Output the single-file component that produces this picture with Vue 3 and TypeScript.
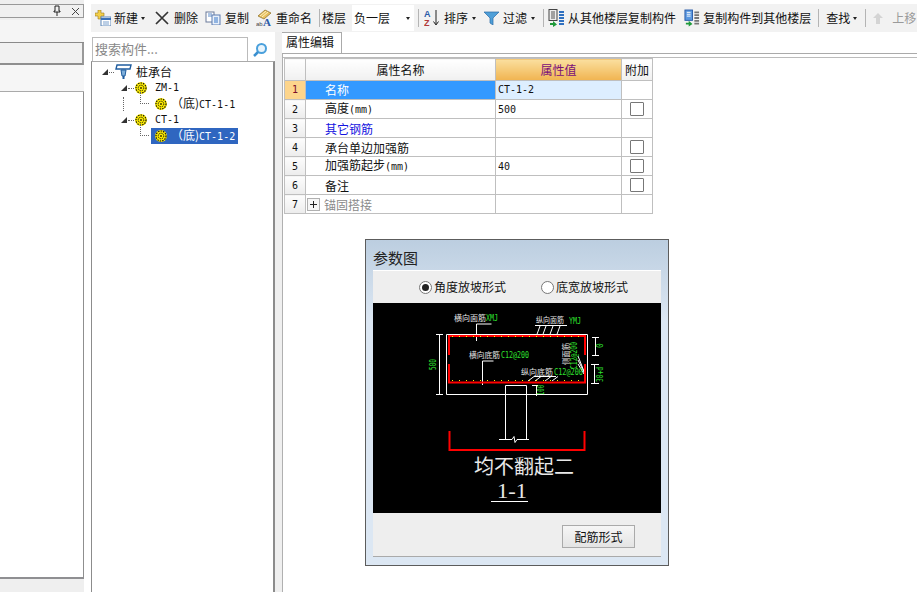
<template>
  <div class="app">
    <svg class="defs" width="0" height="0">
      <symbol id="gear" viewBox="0 0 12 12">
        <circle cx="6" cy="6" r="6" fill="#ffee00" />
        <circle cx="6" cy="6" r="5" fill="none" stroke="#111" stroke-width="1.200" stroke-dasharray="1.400 1.100" />
        <circle cx="6" cy="6" r="2.800" fill="none" stroke="#111" stroke-width="1" stroke-dasharray="1.300 .9" />
        <circle cx="6" cy="6" r="1" fill="#443a00" />
      </symbol>
      <symbol id="floors-a" viewBox="0 0 17 18">
        <rect x="1" y=".5" width="8" height="11" fill="#eee" stroke="#444" />
        <path d="M3 3h4M3 5h4M3 7h4M3 9h4" stroke="#555" />
        <path d="M11 3h5M11 6h5M11 9h5M11 12h5M11 15h5" stroke="#2f70c0" stroke-width="2" />
        <path d="M2 14h3v-2l4 3.500-4 2.500v-2H2z" fill="#1f9a3a" />
      </symbol>
      <symbol id="floors-b" viewBox="0 0 17 18">
        <rect x="1" y=".5" width="8" height="11" fill="#5a98e0" stroke="#2a5ca8" />
        <path d="M3 3h4M3 5h4M3 7h4" stroke="#fff" />
        <path d="M11 3h5M11 6h5M11 9h5M11 12h5M11 15h5" stroke="#777" stroke-width="2" />
        <path d="M2 14h3v-2l4 3.500-4 2.500v-2H2z" fill="#1f9a3a" />
      </symbol>
    </svg>

    <aside class="left">
      <div class="left-head">
        <svg width="10" height="12" viewBox="0 0 10 12" class="pin"><path d="M3 1h4v5h1v1H2V6h1zM5 7v4" fill="none" stroke="#222" /></svg>
        <svg width="9" height="9" viewBox="0 0 9 9" class="close"><path d="M1 1l7 7M8 1L1 8" stroke="#444" /></svg>
      </div>
      <div class="left-row"></div>
      <div class="left-btn"></div>
      <div class="left-row2"></div>
      <div class="left-list"></div>
    </aside>

    <div class="main">
      <div class="toolbar">
        <div class="tb m4 g3">
          <svg width="16" height="16" viewBox="0 0 16 16">
            <path d="M3 0h3v3h3v3H6v3H3V6H0V3h3z" fill="#f2cf4a" stroke="#9a7a20" stroke-width=".6" />
            <rect x="6" y="7" width="10" height="9" fill="#fff" stroke="#5a86b8" />
            <path d="M6 9h10" stroke="#3a70b8" stroke-width="2" />
            <path d="M8 12h6M8 14h6" stroke="#7aa0cc" />
          </svg>
          <span>新建</span><i class="caret"></i>
        </div>
        <div class="tb m10 g5">
          <svg width="14" height="14" viewBox="0 0 14 14"><path d="M1 1l12 12M13 1L1 13" stroke="#333" stroke-width="1.700" /></svg>
          <span>删除</span>
        </div>
        <div class="tb m7 g4">
          <svg width="16" height="14" viewBox="0 0 16 14">
            <rect x="1" y="1" width="8" height="10" fill="#fff" stroke="#6a7a9a" />
            <path d="M3 3h4M3 5h4" stroke="#5a8ac8" />
            <rect x="7" y="4" width="8" height="10" fill="#e8f0fa" stroke="#5a7ab0" />
            <path d="M9 7h4M9 9h4M9 11h4" stroke="#3a78c8" />
          </svg>
          <span>复制</span>
        </div>
        <div class="tb m7 g4">
          <svg width="16" height="18" viewBox="0 0 16 18">
            <path d="M2 7l7-6 6 3-7 6z" fill="#e8c060" stroke="#8a6a20" stroke-width=".7" />
            <path d="M4 7l6-5M6 8l6-5" stroke="#fff2c0" />
            <text x="0" y="17" class="ic-ab">ab</text>
            <text x="7" y="17" class="ic-a">A</text>
          </svg>
          <span>重命名</span>
        </div>
        <i class="sep m7"></i>
        <div class="tb m2"><span>楼层</span></div>
        <div class="combo">
          <span>负一层</span><i class="caret"></i>
        </div>
        <i class="sep m4"></i>
        <div class="tb m5 g4">
          <svg width="16" height="18" viewBox="0 0 16 18">
            <text x="0" y="8" class="ic-sa">A</text>
            <text x="0" y="17" class="ic-sz">Z</text>
            <path d="M12 1v14M9.500 12.500L12 16l2.500-3.500" fill="none" stroke="#222" />
          </svg>
          <span>排序</span><i class="caret"></i>
        </div>
        <div class="tb m8 g4">
          <svg width="15" height="14" viewBox="0 0 15 14"><path d="M0 1h15L9 7v7L6 12V7z" fill="#4f9fd8" stroke="#2a6ca8" stroke-width=".7" /></svg>
          <span>过滤</span><i class="caret"></i>
        </div>
        <i class="sep m8"></i>
        <div class="tb m4 g3">
          <svg width="17" height="18"><use href="#floors-a" /></svg>
          <span>从其他楼层复制构件</span>
        </div>
        <div class="tb m8 g3">
          <svg width="16" height="18"><use href="#floors-b" /></svg>
          <span>复制构件到其他楼层</span>
        </div>
        <i class="sep m7"></i>
        <div class="tb m7"><span>查找</span><i class="caret"></i></div>
        <i class="sep m8"></i>
        <div class="tb m7 g9 off">
          <svg width="10" height="11" viewBox="0 0 10 11"><path d="M5 0l5 5H7v6H3V5H0z" fill="#d4d4d4" /></svg>
          <span>上移</span>
        </div>
      </div>

      <div class="body">
        <div class="mid">
          <div class="search">
            <div class="search-input">搜索构件...</div>
            <div class="search-btn">
              <svg width="16" height="16" viewBox="0 0 16 16">
                <circle cx="9.500" cy="6.500" r="4.500" fill="#e8f4fc" stroke="#4aa0dc" stroke-width="2" />
                <path d="M6 10l-4 4" stroke="#3a90d0" stroke-width="2.500" />
              </svg>
            </div>
          </div>
          <div class="tree">
            <i class="vdots"></i>
            <div class="node root">
              <i class="arrow"></i><i class="hdots h5"></i>
              <svg width="17" height="16" viewBox="0 0 17 16" class="pile">
                <path d="M2 1h14l-1 4H1z" fill="#fff" stroke="#1f5c9e" stroke-width="1.400" />
                <path d="M6 6h5l-1 6H7z" fill="#7fb0dc" stroke="#1f5c9e" />
                <path d="M8.500 12v3" stroke="#1f5c9e" stroke-width="2" />
              </svg>
              <span>桩承台</span>
            </div>
            <template v-for="n in nodes" :key="n.name">
              <div class="node lv1">
                <i class="arrow"></i><i class="hdots h3"></i>
                <svg width="12" height="12" class="gear"><use href="#gear" /></svg>
                <span class="lat name1">{{ n.name }}</span>
              </div>
              <div class="node lv2">
                <i class="elbow"></i>
                <div class="leaf" :class="{ sel: n.sel }">
                  <svg width="12" height="12" class="gear"><use href="#gear" /></svg>
                  <span class="leaf-text">（底)<span class="lat">{{ n.child }}</span></span>
                </div>
              </div>
            </template>
          </div>
        </div>

        <div class="content">
          <div class="tabs"><div class="tab">属性编辑</div></div>
          <div class="pane">
            <table class="grid">
              <thead>
                <tr>
                  <th class="c-no"></th>
                  <th class="c-name">属性名称</th>
                  <th class="c-val">属性值</th>
                  <th class="c-add">附加</th>
                </tr>
              </thead>
              <tbody>
                <tr v-for="(r, i) in rows" :key="i" :class="{ active: i === 0 }">
                  <td class="no">{{ i + 1 }}</td>
                  <td class="nm" :class="{ link: r.link, muted: r.plus }">
                    <i v-if="r.plus" class="plus"></i>{{ r.name }}<span v-if="r.unit" class="unit">(mm)</span>
                  </td>
                  <td class="val lat">{{ r.value }}</td>
                  <td class="add"><i v-if="r.check" class="check"></i></td>
                </tr>
              </tbody>
            </table>

            <div class="dialog">
              <div class="dlg-title">参数图</div>
              <div class="dlg-inner">
                <div class="radios">
                  <label class="radio"><i class="dot on"></i>角度放坡形式</label>
                  <label class="radio"><i class="dot"></i>底宽放坡形式</label>
                </div>
                <svg class="cad" width="288" height="210" viewBox="373 303 288 210">
                  <rect x="373" y="303" width="288" height="210" fill="#000" />
                  <!-- concrete outline and pile -->
                  <g fill="none" stroke="#fff">
                    <path d="M446.500 334.500h141v60h-141z" />
                    <path d="M505.500 394.500v-9h21v9M505.500 394v45M526.500 394v45" />
                    <path d="M499 439.500h13l2 -3 1 6 2-3h12" />
                    <path d="M439.500 334v60M436 334.500h7M436 394.500h7" />
                    <path d="M595.500 337v18M592 337.500h7M592 355.500h7" />
                    <path d="M594.500 364v20M591 364.500h8M591 383.500h8" />
                    <path d="M536.500 385v11M532 385.500h6" />
                    <path d="M476.500 341v-17h15" />
                    <path d="M482.500 385v-24h11" />
                    <path d="M535 325.500h32M540 326l-4 11M546 326l-4 11M553 326l-4 11M560 326l-4 11" />
                    <path d="M528 381l6-4.500h22M535 381l6-4.500M545 381l6-4.500M552 381l6-4.500" />
                    <path d="M578 356l7 18M578 360l7 14M578 364l6 10" />
                    <path d="M491 501.500h37" />
                  </g>
                  <!-- rebar -->
                  <g fill="none" stroke="#f00" stroke-width="2">
                    <path d="M449 355v-19h136v19" />
                    <path d="M449 364v18.500h136V364" />
                    <path d="M449.500 431v19h135v-19" />
                  </g>
                  <g fill="none" stroke="#ff0" stroke-dasharray="1 6">
                    <path d="M452 336.500h132" />
                    <path d="M452 380.500h132" />
                  </g>
                  <!-- labels -->
                  <g class="cad-s">
                    <text x="454" y="321">横向面筋</text>
                    <text x="536" y="323" textLength="28" lengthAdjust="spacingAndGlyphs">纵向面筋</text>
                    <text x="469" y="358" textLength="31" lengthAdjust="spacingAndGlyphs">横向底筋</text>
                    <text x="521" y="375" textLength="32" lengthAdjust="spacingAndGlyphs">纵向底筋</text>
                    <text transform="translate(569 365) rotate(-90)" textLength="22" lengthAdjust="spacingAndGlyphs">侧面筋</text>
                  </g>
                  <g class="cad-g">
                    <text x="486" y="321" textLength="12" lengthAdjust="spacingAndGlyphs">XMJ</text>
                    <text x="569" y="324" textLength="12" lengthAdjust="spacingAndGlyphs">YMJ</text>
                    <text x="501" y="358" textLength="28" lengthAdjust="spacingAndGlyphs">C12@200</text>
                    <text x="554" y="375" textLength="29" lengthAdjust="spacingAndGlyphs">C12@200</text>
                    <text transform="translate(577 369) rotate(-90)" textLength="27" lengthAdjust="spacingAndGlyphs">C12@200</text>
                    <text transform="translate(436 370) rotate(-90)" textLength="11" lengthAdjust="spacingAndGlyphs">500</text>
                    <text transform="translate(603 348) rotate(-90)">0</text>
                    <text transform="translate(603 382) rotate(-90)" textLength="15" lengthAdjust="spacingAndGlyphs">30+d</text>
                    <text transform="translate(544 395) rotate(-90)" textLength="10" lengthAdjust="spacingAndGlyphs">100</text>
                  </g>
                  <text x="524" y="474" class="cad-big">均不翻起二</text>
                  <text x="497" y="498" class="cad-sec" textLength="30" lengthAdjust="spacingAndGlyphs">1-1</text>
                </svg>
                <div class="dlg-foot"><button class="btn">配筋形式</button></div>
              </div>
            </div>
          </div>
        </div>
      </div>
    </div>
  </div>
</template>

<script setup lang="ts">
interface Row {
  name: string
  value?: string
  unit?: boolean
  check?: boolean
  link?: boolean
  plus?: boolean
}

const nodes = [
  { name: 'ZM-1', child: 'CT-1-1', sel: false },
  { name: 'CT-1', child: 'CT-1-2', sel: true },
]

const rows: Row[] = [
  { name: '名称', value: 'CT-1-2' },
  { name: '高度', unit: true, value: '500', check: true },
  { name: '其它钢筋', link: true },
  { name: '承台单边加强筋', check: true },
  { name: '加强筋起步', unit: true, value: '40', check: true },
  { name: '备注', check: true },
  { name: '锚固搭接', plus: true },
]
</script>

<style>
html, body { margin: 0; background: #fff; overflow: hidden; }
</style>

<style scoped>
.app {
  display: flex;
  width: 917px;
  height: 592px;
  overflow: hidden;
  background: #fff;
  color: #111;
  font: 12px/16px "Noto Sans CJK SC", "Liberation Sans", sans-serif;
}
.defs { position: absolute; }
i { display: block; flex: none; }
.lat { font-family: "DejaVu Sans Mono", "Liberation Mono", monospace; font-size: 10px; }

/* left dock */
.left { width: 84px; flex: none; padding-top: 4px; display: flex; flex-direction: column; box-sizing: border-box; background: #efefef; }
.left-head { height: 12px; flex: none; border: 1px solid #999; border-left: 0; background: #f0f0f0; display: flex; align-items: center; justify-content: flex-end; gap: 9px; padding-right: 3px; }
.left-row { height: 22px; flex: none; margin-top: 2px; background: #f5f5f5; border-bottom: 1px solid #8a8a8a; }
.left-btn { height: 20px; flex: none; background: #f1f1f1; border-bottom: 2px solid #8f8f8f; border-right: 2px solid #999; }
.left-row2 { height: 26px; flex: none; background: #f6f6f6; border-bottom: 1px solid #aaa; }
.left-list { height: 487px; flex: none; background: #fff; border-right: 1px solid #8f8f8f; border-bottom: 2px solid #8f8f92; box-sizing: border-box; }

/* toolbar */
.main { width: 833px; flex: none; display: flex; flex-direction: column; }
.toolbar { height: 28px; margin-top: 4px; margin-left: 7px; background: #f2f2f2; display: flex; align-items: center; white-space: nowrap; overflow: hidden; flex: none; }
.tb { display: flex; align-items: center; flex: none; }
.tb span, .combo span { flex: none; }
.off { color: #9a9a9a; }
.m2 { margin-left: 2px; } .m4 { margin-left: 4px; } .m5 { margin-left: 5px; } .m7 { margin-left: 7px; } .m8 { margin-left: 8px; } .m10 { margin-left: 10px; }
.g3 { gap: 3px; } .g4 { gap: 4px; } .g5 { gap: 5px; } .g9 { gap: 9px; }
.caret { width: 0; height: 0; border: 2.500px solid transparent; border-top: 3px solid #222; border-bottom: 0; margin-left: 3px; }
.g3 .caret { margin-left: 0; }
.g4 .caret { margin-left: 0; }
.sep { width: 1px; height: 18px; background: #b4b4b4; flex: none; }
.combo { width: 62px; height: 26px; margin-left: 6px; background: #fff; display: flex; align-items: center; justify-content: space-between; padding: 0 4px 0 2px; box-sizing: border-box; flex: none; }
.ic-ab { font: 6px "Liberation Sans", sans-serif; fill: #444; }
.ic-a { font: bold 11px "Liberation Serif", serif; fill: #2a5aa8; }
.ic-sa { font: bold 9px "Liberation Sans", sans-serif; fill: #2a5aa8; }
.ic-sz { font: bold 9px "Liberation Sans", sans-serif; fill: #b03a3a; }

/* tree column */
.body { flex: 1; display: flex; min-height: 0; }
.mid { width: 191px; flex: none; background: #fff; padding-left: 7px; box-sizing: border-box; display: flex; flex-direction: column; position: relative; }
.search { height: 29px; padding-top: 5px; box-sizing: border-box; display: flex; flex: none; }
.search-input { width: 156px; height: 24px; margin-left: 1px; box-sizing: border-box; border: 1px solid #bbb; border-bottom: 0; color: #888; font-size: 13px; line-height: 22px; padding-left: 2px; }
.search-btn { width: 24px; display: flex; justify-content: center; padding-top: 5px; }
.tree { flex: 1; border-left: 1px solid #8c8c8c; border-top: 1px solid #aaa; border-right: 2px solid #8c8c8c; padding-top: 2px; position: relative; }
.node { height: 16px; display: flex; align-items: center; }
.root { padding-left: 10px; }
.lv1 { padding-left: 29px; }
.lv2 { padding-left: 48px; }
.arrow { width: 0; height: 0; border-style: solid; border-width: 0 0 6px 6px; border-color: transparent transparent #333 transparent; }
.hdots { height: 0; border-top: 1px dotted #666; margin-left: 1px; margin-right: 1px; }
.h5 { width: 5px; }
.h3 { width: 6px; }
.pile { flex: none; margin-right: 4px; }
.gear { flex: none; }
.name1 { margin-left: 8px; }
.elbow { width: 9px; height: 12px; margin-top: -12px; margin-right: 3px; margin-left: 0; border-left: 1px dotted #666; border-bottom: 1px dotted #666; box-sizing: border-box; }
.leaf { display: flex; align-items: center; height: 16px; padding: 0 5px 0 4px; margin-left: -1px; width: 87px; box-sizing: border-box; }
.leaf-text { margin-left: 4px; white-space: nowrap; }
.leaf.sel { background: #2f66c0; color: #fff; }
.vdots { position: absolute; left: 31px; top: 35px; height: 14px; border-left: 1px dotted #666; }

/* property grid */
.content { flex: 1; display: flex; flex-direction: column; min-width: 0; padding-left: 7px; background: #efefef; }
.tabs { height: 21px; flex: none; background: #fff; border-bottom: 1px solid #aaa; display: flex; }
.tab { width: 60px; height: 21px; box-sizing: border-box; background: #fff; border: 1px solid #aaa; border-left: 0; border-bottom: 0; padding: 1px 0 0 4px; }
.pane { flex: 1; background: #fff; border-left: 1px solid #b0b0b0; margin-top: 0; padding-top: 3px; }
.grid { border-collapse: collapse; table-layout: fixed; width: 368px; margin-left: 1px; position: relative; }
.pane::before { content: ""; display: block; height: 1px; background: #bbb; margin-bottom: 0; width: 635px; }
.grid th, .grid td { border: 1px solid #bfbfbf; padding: 0; height: 18px; line-height: 16px; overflow: hidden; white-space: nowrap; }
.grid th { height: 21px; font-weight: 400; background: linear-gradient(#fff, #f0f0f0); text-align: center; }
.grid tbody tr:not(.active) .no, .grid tbody tr:not(.active) .nm, .grid tbody tr:not(.active) .val { vertical-align: bottom; }
.c-no { width: 20px; }
.c-name { width: 189px; }
.c-val { width: 125px; color: #7a0f7a; background: linear-gradient(#fbdf9f, #f0b450) !important; }
.c-add { width: 30px; }
.no { text-align: center; background: linear-gradient(#fdfdfd, #ececec); font-family: "DejaVu Sans Mono", monospace; font-size: 10px; }
.nm { padding-left: 19px !important; }
.val { padding-left: 2px !important; }
.add { text-align: center; }
.link { color: #1414e0; }
.muted { color: #8a8a8a; padding-left: 1px !important; }
.unit { font-family: "DejaVu Sans Mono", monospace; font-size: 10px; }
.plus { display: inline-block; width: 11px; height: 11px; margin-right: 4px; vertical-align: -1px; border: 1px solid #b0b0b0; box-sizing: content-box; background: linear-gradient(#222, #222) center / 7px 1px no-repeat, linear-gradient(#222, #222) center / 1px 7px no-repeat, #f6f6f6; }
.check { display: block; width: 12px; height: 12px; border: 1px solid #777; border-radius: 1px; margin: 0 auto; background: #fff; }
.active .no { background: #fdd58c; color: #7a0f2a; }
.active .nm { background: #3399ff; color: #fff; }
.active .val { background: #ddeeff; }

/* parameter dialog */
.dialog { width: 304px; height: 327px; margin: 25px 0 0 82px; box-sizing: border-box; border: 1px solid #5c5c5c; background: linear-gradient(#bccee0, #dce7f3 25%, #dce7f3); padding: 0 7px; display: flex; flex-direction: column; }
.dlg-title { height: 30px; font-size: 15px; line-height: 35px; flex: none; color: #222; }
.dlg-inner { width: 288px; flex: none; display: flex; flex-direction: column; background: #eee; border-top: 1px solid #fff; border-bottom: 1px solid #aaa; }
.radios { height: 32px; display: flex; align-items: center; padding-left: 46px; gap: 35px; flex: none; }
.radio { display: flex; align-items: center; gap: 2px; }
.dot { width: 11px; height: 11px; border: 1px solid #777; border-radius: 50%; background: #fff; position: relative; }
.dot.on::after { content: ""; position: absolute; inset: 2px; border-radius: 50%; background: #222; }
.cad { display: block; flex: none; }
.cad-s { font: 8px "Noto Sans CJK SC", sans-serif; fill: #e4e4e4; }
.cad-g { font: 8px "DejaVu Sans Mono", monospace; fill: #2fe02f; }
.cad-big { font: 20px "Noto Sans CJK SC", sans-serif; fill: #e8e8e8; text-anchor: middle; }
.cad-sec { font: 20px "Liberation Serif", serif; fill: #e8e8e8; }
.dlg-foot { height: 43px; display: flex; justify-content: flex-end; align-items: flex-start; padding: 12px 26px 0 0; box-sizing: border-box; flex: none; }
.btn { width: 73px; height: 23px; border: 1px solid #aaa; background: linear-gradient(#f6f6f6, #e4e4e4); font: inherit; color: #111; padding: 0; }
</style>
